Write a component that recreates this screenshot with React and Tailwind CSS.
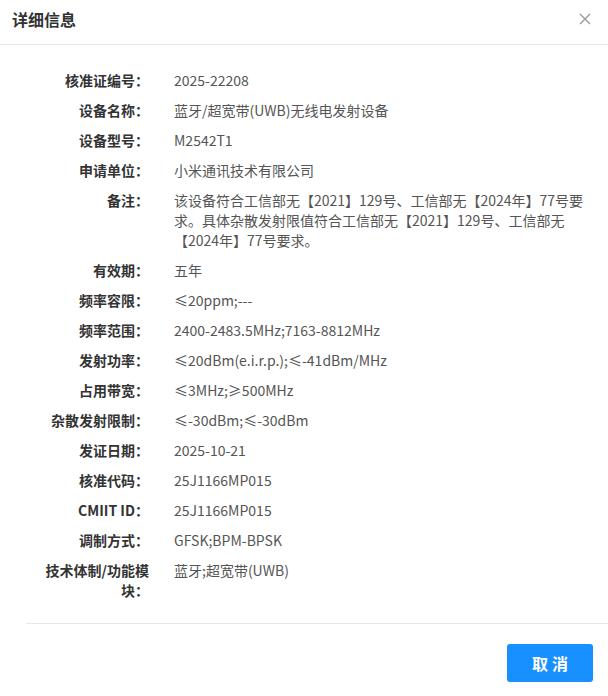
import React from 'react'

// 详细信息弹窗里的字段
const FIELDS = [
  ['核准证编号', '2025-22208'],
  ['设备名称', '蓝牙/超宽带(UWB)无线电发射设备'],
  ['设备型号', 'M2542T1'],
  ['申请单位', '小米通讯技术有限公司'],
  [
    '备注',
    [
      '该设备符合工信部无【2021】129号、工信部无【2024年】77号要',
      '求。具体杂散发射限值符合工信部无【2021】129号、工信部无',
      '【2024年】77号要求。',
    ],
  ],
  ['有效期', '五年'],
  ['频率容限', '≤20ppm;---'],
  ['频率范围', '2400-2483.5MHz;7163-8812MHz'],
  ['发射功率', '≤20dBm(e.i.r.p.);≤-41dBm/MHz'],
  ['占用带宽', '≤3MHz;≥500MHz'],
  ['杂散发射限制', '≤-30dBm;≤-30dBm'],
  ['发证日期', '2025-10-21'],
  ['核准代码', '25J1166MP015'],
  ['CMIIT ID', '25J1166MP015'],
  ['调制方式', 'GFSK;BPM-BPSK'],
  ['技术体制/功能模块', '蓝牙;超宽带(UWB)'],
]

const App = () => {
  return (
    <div
      className="w-[608px] h-[696px] bg-white flex flex-col text-[#333]"
      style={{ fontFamily: '"Noto Sans CJK SC", "Noto Sans", sans-serif' }}
    >
      {/* header */}
      <div className="h-[45px] flex items-center justify-between pl-3 pr-[17px] pb-[7px] border-b border-[#e8e8e8]">
        <h2 className="text-base font-bold text-[#333]">详细信息</h2>
        <button className="text-[#999]">
          <svg width="12" height="12" viewBox="0 0 12 12">
            <path d="M1 1L11 11M11 1L1 11" stroke="currentColor" strokeWidth="1.4" />
          </svg>
        </button>
      </div>

      {/* body */}
      <div className="flex flex-col gap-[10px] pt-[25px] pl-[44px] pr-[30px]">
        {FIELDS.map(([label, value]) => (
          <div key={label} className="flex text-sm leading-5">
            <div className="w-[105px] shrink-0 text-right font-bold text-[#333]">{label}：</div>
            <div className="flex-1 ml-[25px] text-[#555]">
              {Array.isArray(value)
                ? value.map((line) => (
                    <div key={line} className="whitespace-nowrap">{line}</div>
                  ))
                : value}
            </div>
          </div>
        ))}
      </div>

      {/* footer */}
      <div className="mt-[23px] ml-[26px] border-t border-[#e8e8e8] flex justify-end pt-5 pr-[15px]">
        <button className="w-[86px] h-[38px] rounded-[3px] bg-[#1890ff] text-white text-base font-bold tracking-[4px] pl-1">
          取消
        </button>
      </div>
    </div>
  )
}

export default App
